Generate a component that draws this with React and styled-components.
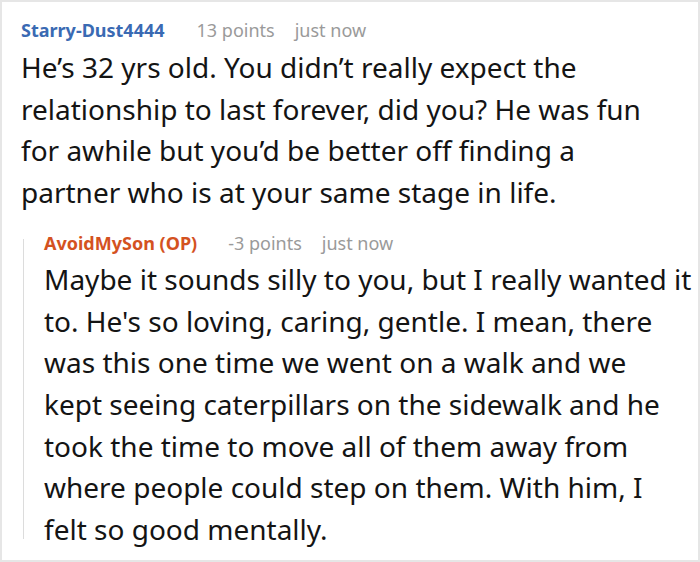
import React from "react";
import styled, { createGlobalStyle } from "styled-components";

const Global = createGlobalStyle`
  html, body { margin: 0; padding: 0; background: #fff; }
  body { font-family: "Noto Sans", "Open Sans", sans-serif; }
`;

const Frame = styled.div`
  box-sizing: border-box;
  width: 700px;
  height: 562px;
  border: 2px solid #e6e6e6;
  padding: 15px 0 0 19px;
  background: #fff;
  overflow: hidden;
`;

const Header = styled.div`
  display: flex;
  align-items: baseline;
  height: 26px;
  line-height: 26px;
  font-size: 18px;
`;

const Author = styled.span`
  font-weight: 700;
  color: ${(p) => p.$color};
  margin-right: ${(p) => p.$gap}px;
`;

const Meta = styled.span`
  color: #9a9a9a;
  margin-right: 20px;
`;

const Body = styled.p`
  margin: ${(p) => p.$top}px 0 0 0;
  font-size: 28px;
  line-height: 41.7px;
  color: #141414;
  white-space: nowrap;
`;

const Reply = styled.div`
  display: flex;
  margin-top: 16px;
`;

const Thread = styled.div`
  width: 1px;
  background: #dcdcdc;
  margin: 9px 20px 12px 2px;
  flex: none;
`;

const ReplyContent = styled.div`
  flex: 1;
`;

const Text = ({ lines, top }) => (
  <Body $top={top}>
    {lines.map((l, i) => (
      <React.Fragment key={i}>
        {l}
        {i < lines.length - 1 && <br />}
      </React.Fragment>
    ))}
  </Body>
);

export default function App() {
  return (
    <>
      <Global />
      <Frame>
        <Header>
          <Author $color="#3a6ab3" $gap={32}>Starry-Dust4444</Author>
          <Meta>13 points</Meta>
          <Meta>just now</Meta>
        </Header>
        <Text
          top={4}
          lines={[
            "He’s 32 yrs old. You didn’t really expect the",
            "relationship to last forever, did you? He was fun",
            "for awhile but you’d be better off finding a",
            "partner who is at your same stage in life.",
          ]}
        />
        <Reply>
          <Thread />
          <ReplyContent>
            <Header>
              <Author $color="#d4521f" $gap={31}>AvoidMySon (OP)</Author>
              <Meta>-3 points</Meta>
              <Meta>just now</Meta>
            </Header>
            <Text
              top={3}
              lines={[
                "Maybe it sounds silly to you, but I really wanted it",
                "to. He's so loving, caring, gentle. I mean, there",
                "was this one time we went on a walk and we",
                "kept seeing caterpillars on the sidewalk and he",
                "took the time to move all of them away from",
                "where people could step on them. With him, I",
                "felt so good mentally.",
              ]}
            />
          </ReplyContent>
        </Reply>
      </Frame>
    </>
  );
}
